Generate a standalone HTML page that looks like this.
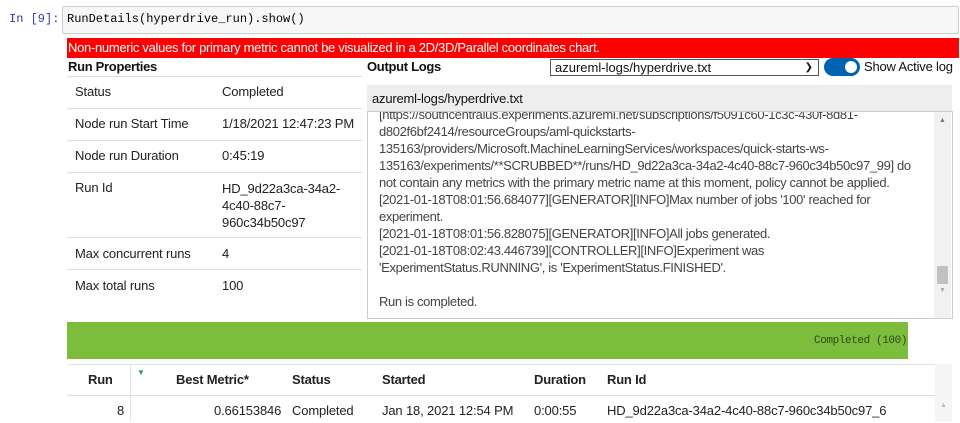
<!DOCTYPE html>
<html><head><style>
body{margin:0;width:960px;height:422px;overflow:hidden;background:#fff;font-family:"Liberation Sans",Arial,sans-serif;position:relative}
.a{position:absolute;white-space:nowrap}
.mono{font-family:"Liberation Mono",monospace}
.t{font-size:13px;color:#222;letter-spacing:-0.15px}
.hl{position:absolute;left:67px;width:295px;height:1px;background:#ddd}
.log{font-size:13px;color:#444;line-height:17px;letter-spacing:-0.35px}
.th{font-size:13px;font-weight:bold;color:#222;top:372px;letter-spacing:-0.2px}
.td{font-size:13px;color:#222;top:403px;letter-spacing:-0.15px}
</style></head><body>
<div class="a mono" style="left:9px;top:12px;font-size:12px;color:#303f9f">In [9]:</div>
<div class="a" style="left:62px;top:6px;width:895px;height:26px;background:#f7f7f7;border:1px solid #cfcfcf;border-radius:2px"></div>
<div class="a mono" style="left:67px;top:12px;font-size:12px;color:#000">RunDetails(hyperdrive_run).show()</div>
<div class="a" style="left:67px;top:38px;width:891px;height:20px;background:#ff0000;color:#fff;font-size:13px;line-height:20px;padding-left:1px;letter-spacing:-0.3px">Non-numeric values for primary metric cannot be visualized in a 2D/3D/Parallel coordinates chart.</div>
<div class="a" style="left:68px;top:59px;font-size:13px;font-weight:bold;color:#111;letter-spacing:-0.3px">Run Properties</div>
<div class="hl" style="top:76px"></div>
<div class="hl" style="top:108px"></div>
<div class="hl" style="top:140px"></div>
<div class="hl" style="top:172px"></div>
<div class="hl" style="top:237px"></div>
<div class="hl" style="top:269px"></div>
<div class="a t" style="left:75px;top:84px">Status</div><div class="a t" style="left:222px;top:84px">Completed</div>
<div class="a t" style="left:75px;top:116px">Node run Start Time</div><div class="a t" style="left:222px;top:116px">1/18/2021 12:47:23 PM</div>
<div class="a t" style="left:75px;top:148px">Node run Duration</div><div class="a t" style="left:222px;top:148px">0:45:19</div>
<div class="a t" style="left:75px;top:180px">Run Id</div><div class="a t" style="left:222px;top:180px;line-height:17px">HD_9d22a3ca-34a2-<br>4c40-88c7-<br>960c34b50c97</div>
<div class="a t" style="left:75px;top:246px">Max concurrent runs</div><div class="a t" style="left:222px;top:246px">4</div>
<div class="a t" style="left:75px;top:278px">Max total runs</div><div class="a t" style="left:222px;top:278px">100</div>
<div class="a" style="left:367px;top:59px;font-size:13px;font-weight:bold;color:#111;letter-spacing:-0.3px">Output Logs</div>
<div class="a" style="left:550px;top:59px;width:267px;height:15px;border:1px solid #555;font-size:13px;line-height:15px;color:#111"><span style="padding-left:4px">azureml-logs/hyperdrive.txt</span><span style="position:absolute;right:5px;top:0;font-size:10px">&#10095;</span></div>
<div class="a" style="left:824px;top:58px;width:36px;height:18px;border-radius:9px;background:#0063b1"></div>
<div class="a" style="left:845px;top:61px;width:12px;height:12px;border-radius:6px;background:#fff"></div>
<div class="a" style="left:864px;top:59px;font-size:13px;color:#111;letter-spacing:-0.2px">Show Active log</div>
<div class="a" style="left:367px;top:85px;width:585px;height:26px;background:#eee"></div>
<div class="a" style="left:372px;top:91px;font-size:13px;color:#111;letter-spacing:-0.2px">azureml-logs/hyperdrive.txt</div>
<div class="a" style="left:367px;top:111px;width:584px;height:206px;border:1px solid #ccc;overflow:hidden;background:#fff">
<div class="a log" style="left:11px;top:-6px">[https://southcentralus.experiments.azureml.net/subscriptions/f5091c60-1c3c-430f-8d81-<br>d802f6bf2414/resourceGroups/aml-quickstarts-<br>135163/providers/Microsoft.MachineLearningServices/workspaces/quick-starts-ws-<br>135163/experiments/**SCRUBBED**/runs/HD_9d22a3ca-34a2-4c40-88c7-960c34b50c97_99] do<br>not contain any metrics with the primary metric name at this moment, policy cannot be applied.<br>[2021-01-18T08:01:56.684077][GENERATOR][INFO]Max number of jobs '100' reached for<br>experiment.<br>[2021-01-18T08:01:56.828075][GENERATOR][INFO]All jobs generated.<br>[2021-01-18T08:02:43.446739][CONTROLLER][INFO]Experiment was<br>'ExperimentStatus.RUNNING', is 'ExperimentStatus.FINISHED'.<br><br>Run is completed.</div>
<div class="a" style="left:566px;top:0;width:17px;height:206px;background:#f1f1f1"></div>
<div class="a" style="left:569px;top:154px;width:11px;height:18px;background:#c1c1c1"></div>
<div class="a" style="left:571px;top:5px;font-size:7px;color:#777">&#9650;</div>
<div class="a" style="left:571px;top:175px;font-size:7px;color:#aaa">&#9660;</div>
</div>
<div class="a" style="left:67px;top:322px;width:841px;height:37px;background:#7cbd3c"></div>
<div class="a mono" style="left:814px;top:335px;font-size:11px;color:#2e4a1a;letter-spacing:-0.4px">Completed (100)</div>
<div class="a" style="left:67px;top:364px;width:885px;height:58px;background:#fff;border-top:1px solid #e5e5e5"></div>
<div class="a" style="left:67px;top:395px;width:868px;height:1px;background:#ddd"></div>
<div class="a" style="left:130px;top:364px;width:1px;height:58px;background:#e5e5e5"></div>
<div class="a" style="left:935px;top:364px;width:17px;height:58px;background:#f5f5f5"></div>
<div class="a" style="left:940px;top:402px;font-size:7px;color:#bbb">&#9650;</div>
<div class="a" style="left:137px;top:368px;font-size:8px;color:#1a9a7a">&#9660;</div>
<div class="a th" style="left:88px">Run</div>
<div class="a th" style="left:176px">Best Metric*</div>
<div class="a th" style="left:292px">Status</div>
<div class="a th" style="left:382px">Started</div>
<div class="a th" style="left:534px">Duration</div>
<div class="a th" style="left:607px">Run Id</div>
<div class="a td" style="left:117px">8</div>
<div class="a td" style="left:214px">0.66153846</div>
<div class="a td" style="left:292px">Completed</div>
<div class="a td" style="left:382px">Jan 18, 2021 12:54 PM</div>
<div class="a td" style="left:534px">0:00:55</div>
<div class="a td" style="left:607px">HD_9d22a3ca-34a2-4c40-88c7-960c34b50c97_6</div>
</body></html>
